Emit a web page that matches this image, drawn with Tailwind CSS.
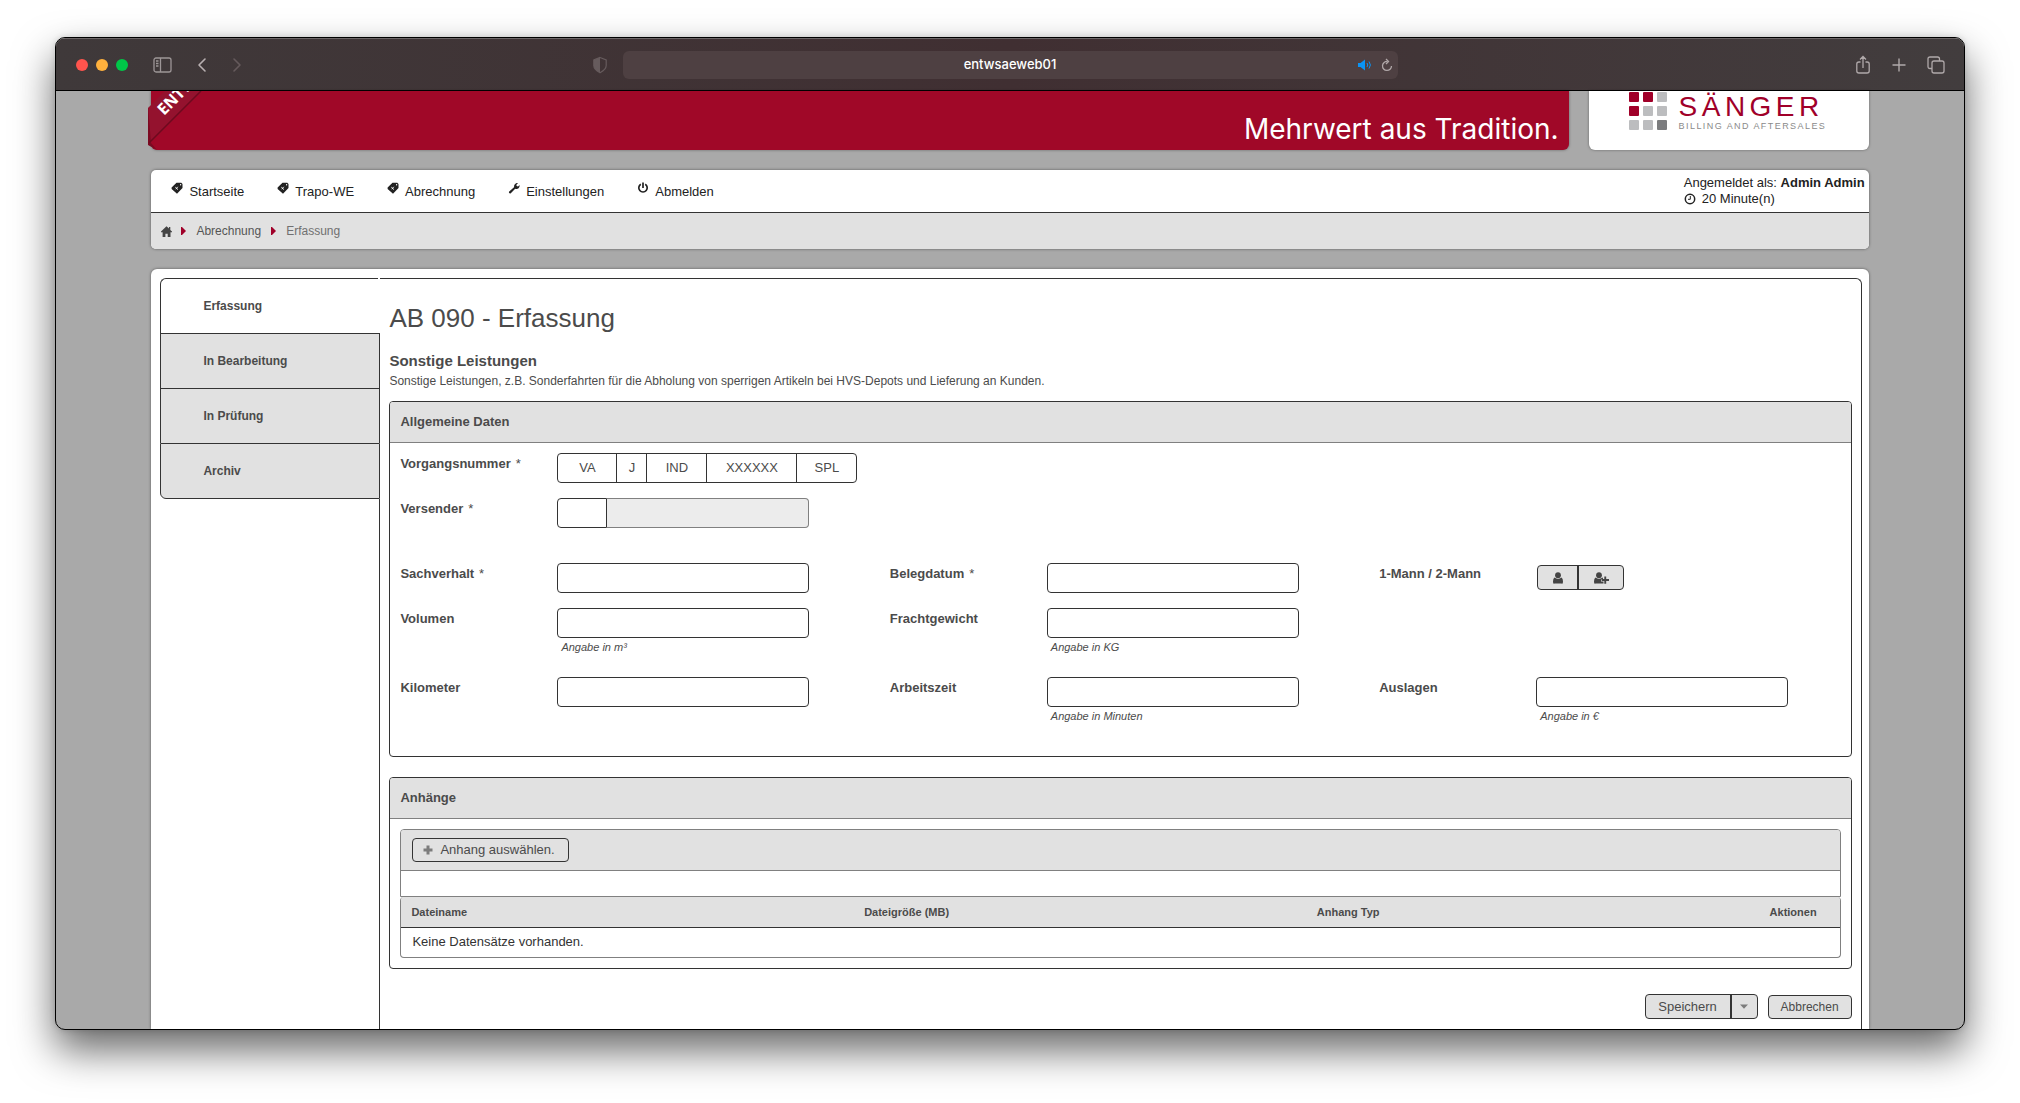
<!DOCTYPE html>
<html lang="de">
<head>
<meta charset="utf-8">
<title>entwsaeweb01</title>
<script src="https://cdn.jsdelivr.net/npm/@tailwindcss/browser@4"></script>
</head>
<body class="flex h-screen flex-col overflow-hidden bg-white px-[55px] pt-[37px] pb-[73px] font-['Liberation_Sans',Arial,sans-serif] text-[13px] text-[#4b4b4b]">
<svg class="hidden">
  <symbol id="tag" viewBox="0 0 12 12"><path fill="currentColor" fill-rule="evenodd" d="M5.500.8h4.800l1.200 1.200v4L6 11.800.6 7V5.600ZM9.600 2a.7.7 0 1 0 0 1.400.7.700 0 0 0 0-1.400Z"/><path stroke="#fff" stroke-width=".9" d="M4.300 5.200 7 7.600M6.800 4.800 4.800 7.200"/></symbol>
</svg>

<div class="flex min-h-0 flex-1 flex-col overflow-hidden rounded-[10px] border border-black bg-[#a9a9a9] shadow-[0_20px_40px_rgba(0,0,0,0.6),0_0_6px_rgba(0,0,0,0.15)]">

  <!-- browser toolbar -->
  <div class="grid h-[53px] shrink-0 grid-cols-[1fr_775px_1fr] items-center border-t border-b border-t-[#6c6667] border-b-black bg-linear-to-r from-[#3f393a] via-[#402f32] to-[#423d3e]">
    <div class="flex items-center pl-5">
      <div class="flex gap-2">
        <span class="size-3 rounded-full bg-[#ff544d]"></span>
        <span class="size-3 rounded-full bg-[#ffb13d]"></span>
        <span class="size-3 rounded-full bg-[#00c748]"></span>
      </div>
      <button class="ml-6 text-[#9d9697]" aria-label="Seitenleiste"><svg class="h-4 w-5" viewBox="0 0 20 16" fill="none" stroke="currentColor" stroke-width="1.300"><rect x="2" y="1" width="17" height="14" rx="2"/><path d="M8.500 1v14M4 4h2.500M4 6.500h2.500M4 9h2.500"/></svg></button>
      <button class="ml-6 text-[#b8b0b1]" aria-label="Zurück"><svg class="h-4 w-3" viewBox="0 0 12 16" fill="none" stroke="currentColor" stroke-width="1.600" stroke-linecap="round" stroke-linejoin="round"><path d="M9 2 3 8l6 6"/></svg></button>
      <button class="ml-6 text-[#655a5c]" aria-label="Vor"><svg class="h-4 w-3" viewBox="0 0 12 16" fill="none" stroke="currentColor" stroke-width="1.600" stroke-linecap="round" stroke-linejoin="round"><path d="m2 2 6 6-6 6"/></svg></button>
      <button class="mr-[15px] ml-auto text-[#665b5d]" aria-label="Datenschutz"><svg class="h-[18px] w-4" viewBox="0 0 16 18"><path d="M8 1.500 14.200 4v5.500c0 3.500-3 5.500-6.200 7.200C4.800 15 1.800 13 1.800 9.500V4Z" fill="none" stroke="currentColor" stroke-width="1.200"/><path d="M8 1.500v15.200C4.800 15 1.800 13 1.800 9.500V4Z" fill="currentColor"/></svg></button>
    </div>
    <div class="flex h-7 items-center rounded-md bg-[#4e4042] px-[5px] text-white">
      <span class="w-9"></span>
      <span class="flex-1 text-center font-['Inter',sans-serif] text-[13px] font-medium">entwsaeweb01</span>
      <span class="flex w-9 items-center gap-2">
        <svg class="h-3 w-4 text-[#0a94f5]" viewBox="0 0 16 12"><path d="M1 4h2.500L8 .5v11L3.500 8H1Z" fill="currentColor"/><path d="M10 4q1.500 2 0 4M12 2.500q2.800 3.500 0 7" fill="none" stroke="currentColor"/></svg>
        <svg class="h-[14px] w-3 text-[#b0a7a8]" viewBox="0 0 12 14" fill="none" stroke="currentColor" stroke-width="1.300"><path d="M6.500 3.500A4.500 4.500 0 1 0 10.500 8M5 1l2.500 2.500L5 6"/></svg>
      </span>
    </div>
    <div class="flex items-center justify-end gap-5 pr-[19px] text-[#b0a9aa]">
      <button aria-label="Teilen"><svg class="h-5 w-4" viewBox="0 0 16 20" fill="none" stroke="currentColor" stroke-width="1.300"><path d="M5.500 7H4Q1.800 7 1.800 9v7Q1.800 18 4 18h8q2.200 0 2.200-2V9Q14.200 7 12 7h-1.500M8 13V1.500M5 4.500l3-3 3 3"/></svg></button>
      <button aria-label="Neuer Tab"><svg class="size-4" viewBox="0 0 16 16" stroke="currentColor" stroke-width="1.400"><path d="M8 1.500v13M1.500 8h13"/></svg></button>
      <button aria-label="Tabübersicht"><svg class="size-[18px]" viewBox="0 0 18 18" fill="none" stroke="currentColor" stroke-width="1.300"><rect x="5" y="5" width="12" height="12" rx="2"/><path d="M5 12.500H3q-2 0-2-2V3q0-2 2-2h7.500q2 0 2 2v2"/></svg></button>
    </div>
  </div>

  <!-- page -->
  <div class="mx-auto flex min-h-0 w-[90%] flex-1 flex-col gap-5">
    <header class="flex h-[59px] shrink-0 gap-5">
      <div class="relative flex flex-1 items-end justify-end rounded-b-[6px] bg-[#a00828] pr-[10px] pb-[3px] shadow-[0_0_3px_rgba(0,0,0,0.4)]">
        <svg class="absolute top-0 -left-[3px] h-[59px] w-[56px]" viewBox="0 0 56 59">
          <path d="M0 17 17 0h36L0 53Z" fill="#94122e"/>
          <path d="M0 15v39l9 5L3 52Z" fill="#7c0a22"/>
          <path d="M53 0 1 52" stroke="#6d0a1e" stroke-width="1.500"/>
          <text transform="translate(16 25) rotate(-45)" fill="#fff" font-family="Open Sans, sans-serif" font-weight="700" font-size="16">ENTWICKLUNG</text>
        </svg>
        <span class="font-['Inter',sans-serif] text-[28px] leading-9 text-white">Mehrwert aus Tradition.</span>
      </div>
      <div class="flex w-[280px] gap-3 rounded-b-[6px] bg-white pl-10 shadow-[0_0_3px_rgba(0,0,0,0.4)]">
        <svg class="h-10 w-[38px]" viewBox="0 0 38 40">
          <g fill="#bcbdbf"><rect x="28" y="1" width="10" height="10" rx="1"/><rect x="14" y="15" width="10" height="10" rx="1"/><rect x="28" y="15" width="10" height="10" rx="1"/><rect y="29" width="10" height="10" rx="1"/><rect x="14" y="29" width="10" height="10" rx="1"/></g>
          <g fill="#a00029"><rect y="1" width="10" height="10" rx="1"/><rect x="14" y="1" width="10" height="10" rx="1"/><rect y="15" width="10" height="10" rx="1"/></g>
          <rect x="28" y="29" width="10" height="10" rx="1" fill="#7b7c7e"/>
        </svg>
        <div class="whitespace-nowrap">
          <div class="text-[28px] leading-[31px] tracking-[0.16em] text-[#a00029]">SÄNGER</div>
          <div class="text-[9px] leading-2 tracking-[0.16em] text-[#8a8a8a]">BILLING AND AFTERSALES</div>
        </div>
      </div>
    </header>

    <div class="shrink-0 overflow-hidden rounded-[5px] bg-white shadow-[0_0_3px_rgba(0,0,0,0.5)]">
      <div class="flex h-[43px] items-center justify-between border-b border-[#333] pr-1 pl-5 text-[#222]">
        <nav class="flex gap-[33px] pt-[2px]">
          <a href="#" class="flex gap-[6px]"><svg class="size-3"><use href="#tag"/></svg>Startseite</a>
          <a href="#" class="flex gap-[6px]"><svg class="size-3"><use href="#tag"/></svg>Trapo-WE</a>
          <a href="#" class="flex gap-[6px]"><svg class="size-3"><use href="#tag"/></svg>Abrechnung</a>
          <a href="#" class="flex gap-[6px]"><svg class="size-3" viewBox="0 0 12 12"><path fill="currentColor" d="M1.200 9.600 6 5.200Q5.500 2.500 8 1.200q1-.4 2 0L8.400 2.800l.2 1.300 1.400.3L11.600 3q.3 2-1 3.200T7.200 6.800L2.800 11.200Q1.800 11.800 1.200 11T1.200 9.600Z"/></svg>Einstellungen</a>
          <a href="#" class="flex gap-[6px]"><svg class="size-3" viewBox="0 0 12 12" fill="none" stroke="currentColor" stroke-width="1.700"><path d="M3.800 2.200a4.200 4.200 0 1 0 4.400 0M6 .5V6"/></svg>Abmelden</a>
        </nav>
        <div class="leading-4">
          <div>Angemeldet als: <b>Admin Admin</b></div>
          <div class="flex items-center gap-[6px]"><svg class="size-3" viewBox="0 0 12 12" fill="none" stroke="currentColor"><circle cx="6" cy="6" r="4.700" stroke-width="1.500"/><path d="M6.300 3v3.300H4"/></svg>20 Minute(n)</div>
        </div>
      </div>
      <nav class="flex h-9 items-center bg-[#e1e1e1] pl-[10px] text-[12px] text-[#555]">
        <a href="#" aria-label="Start"><svg class="h-[11px] w-[11px]" viewBox="0 0 11 11"><path fill="#444" d="M5.500.3 8 2.600V1h1.300v2.900L11 5.600v.6H9.500V11H6.700V7.800H4.400V11H1.600V6.200H0v-.6Z"/></svg></a>
        <svg class="ml-[9px] h-2 w-[5px]" viewBox="0 0 5 8"><path fill="#a00029" d="M0 0h1l4 4-4 4H0z"/></svg>
        <a href="#" class="ml-[10px]">Abrechnung</a>
        <svg class="ml-[10px] h-2 w-[5px]" viewBox="0 0 5 8"><path fill="#a00029" d="M0 0h1l4 4-4 4H0z"/></svg>
        <a href="#" class="ml-[10px] text-[#707070]">Erfassung</a>
      </nav>
    </div>

    <div class="flex min-h-0 flex-1 rounded-t-[6px] bg-white pt-[9px] pr-[7px] pl-[9px] shadow-[0_0_3px_rgba(0,0,0,0.5)]">
      <!-- side tabs -->
      <nav class="flex w-[220px] shrink-0 flex-col text-[12px] font-bold">
        <a href="#" class="mr-[2px] flex h-[55px] items-center rounded-tl-[6px] border-t border-l border-[#333] pl-[42px]">Erfassung</a>
        <a href="#" class="flex h-[55px] items-center border-x border-t border-[#333] bg-[#e1e1e1] pl-[42px]">In Bearbeitung</a>
        <a href="#" class="flex h-[55px] items-center border-x border-t border-[#333] bg-[#e1e1e1] pl-[42px]">In Prüfung</a>
        <a href="#" class="flex h-14 items-center rounded-bl-[6px] border border-[#333] bg-[#e1e1e1] pl-[42px]">Archiv</a>
        <div class="flex-1 border-r border-[#333]"></div>
      </nav>

      <main class="min-w-0 flex-1 overflow-hidden rounded-tr-[6px] border-t border-r border-[#333] px-[9px] pt-[23px]">
        <h1 class="text-[26px] leading-8">AB 090 - Erfassung</h1>
        <h2 class="mt-[17px] text-[15px] leading-5 font-bold">Sonstige Leistungen</h2>
        <p class="mt-[2px] text-[12px] leading-4">Sonstige Leistungen, z.B. Sonderfahrten für die Abholung von sperrigen Artikeln bei HVS-Depots und Lieferung an Kunden.</p>

        <section class="mt-3 overflow-hidden rounded-[4px] border border-[#333]">
          <h3 class="flex h-[41px] items-center border-b border-[#808080] bg-[#e1e1e1] px-[10px] font-bold">Allgemeine Daten</h3>
          <form class="px-[10px] pt-[10px] pb-[25px]">
            <div class="flex"><label for="vn" class="w-[157px] pt-[3px] leading-4 font-bold">Vorgangsnummer<span class="ml-[5px] font-normal">*</span></label>
              <div class="flex h-[30px] divide-x divide-[#333] rounded-[4px] border border-[#333] text-center">
                <input id="vn" value="VA" class="w-[59px] text-center"><input aria-label="Jahr" value="J" class="w-[30px] text-center"><input aria-label="Art" value="IND" class="w-[60px] text-center"><input aria-label="Nummer" value="XXXXXX" class="w-[90px] text-center"><input aria-label="Spedition" value="SPL" class="w-[59px] text-center">
              </div>
            </div>
            <div class="mt-[15px] flex"><label for="vs" class="w-[157px] pt-[3px] leading-4 font-bold">Versender<span class="ml-[5px] font-normal">*</span></label>
              <input id="vs" class="h-[30px] w-[50px] rounded-l-[4px] border border-[#333] px-2"><input aria-label="Versendername" disabled class="h-[30px] w-[202px] rounded-r-[4px] border border-l-0 border-[#808080] bg-[#ececec] px-2">
            </div>
            <div class="mt-[35px] grid grid-cols-3 gap-x-7 gap-y-[15px]">
              <div class="flex"><label for="sv" class="w-[157px] pt-[3px] leading-4 font-bold">Sachverhalt<span class="ml-[5px] font-normal">*</span></label><input id="sv" class="h-[30px] w-[252px] rounded-[4px] border border-[#333] px-2"></div>
              <div class="flex"><label for="bd" class="w-[157px] pt-[3px] leading-4 font-bold">Belegdatum<span class="ml-[5px] font-normal">*</span></label><input id="bd" class="h-[30px] w-[252px] rounded-[4px] border border-[#333] px-2"></div>
              <div class="flex"><span class="w-[157px] pt-[3px] leading-4 font-bold">1-Mann / 2-Mann</span>
                <div class="mt-[2px] ml-px flex h-[25px] overflow-hidden rounded-[4px] border border-[#333] bg-[#e1e1e1]">
                  <button type="button" aria-label="1-Mann" class="flex w-[41px] items-center justify-center border-r-2 border-[#333]"><svg class="h-3 w-[10px]" viewBox="0 0 10 12" fill="#444"><circle cx="5" cy="3.200" r="2.900"/><path d="M1.500 5.500q3.500 2.500 7 0Q10 6.500 10 9.500t-1.500 2h-7Q0 12.500 0 9.500t1.500-4Z"/></svg></button>
                  <button type="button" aria-label="2-Mann" class="flex w-[44px] items-center justify-center"><svg class="h-3 w-[15px]" viewBox="0 0 15 12" fill="#444"><circle cx="5" cy="3.200" r="2.900"/><path d="M1.500 5.500q3.500 2.500 7 0l.5.500v1.500H7v2h2.500v2h-8Q0 12.500 0 9.500t1.500-4ZM10.300 4.500h1.900v2.600H15V9h-2.800v2.700h-1.900V9H7.700V7.100h2.600Z"/></svg></button>
                </div>
              </div>
              <div class="flex"><label for="vo" class="w-[157px] pt-[3px] leading-4 font-bold">Volumen</label><div class="h-[54px]"><input id="vo" class="block h-[30px] w-[252px] rounded-[4px] border border-[#333] px-2"><div class="pt-px pl-1 text-[11px] leading-4 italic">Angabe in m³</div></div></div>
              <div class="flex"><label for="fg" class="w-[157px] pt-[3px] leading-4 font-bold">Frachtgewicht</label><div class="h-[54px]"><input id="fg" class="block h-[30px] w-[252px] rounded-[4px] border border-[#333] px-2"><div class="pt-px pl-1 text-[11px] leading-4 italic">Angabe in KG</div></div></div>
              <div></div>
              <div class="flex"><label for="km" class="w-[157px] pt-[3px] leading-4 font-bold">Kilometer</label><input id="km" class="h-[30px] w-[252px] rounded-[4px] border border-[#333] px-2"></div>
              <div class="flex"><label for="az" class="w-[157px] pt-[3px] leading-4 font-bold">Arbeitszeit</label><div class="h-[54px]"><input id="az" class="block h-[30px] w-[252px] rounded-[4px] border border-[#333] px-2"><div class="pt-px pl-1 text-[11px] leading-4 italic">Angabe in Minuten</div></div></div>
              <div class="flex"><label for="al" class="w-[157px] pt-[3px] leading-4 font-bold">Auslagen</label><div class="h-[54px]"><input id="al" class="block h-[30px] w-[252px] rounded-[4px] border border-[#333] px-2"><div class="pt-px pl-1 text-[11px] leading-4 italic">Angabe in €</div></div></div>
            </div>
          </form>
        </section>

        <section class="mt-5 overflow-hidden rounded-[4px] border border-[#333]">
          <h3 class="flex h-[41px] items-center border-b border-[#808080] bg-[#e1e1e1] px-[10px] font-bold">Anhänge</h3>
          <div class="p-[10px]">
            <div class="overflow-hidden rounded-t-[4px] border border-[#808080]">
              <div class="flex h-[41px] items-center border-b border-[#808080] bg-[#e1e1e1] pl-[11px]">
                <button class="flex h-6 w-[157px] items-center gap-[7px] rounded-[4px] border border-[#333] pl-[10px]"><svg class="size-[10px]" viewBox="0 0 10 10"><path fill="#7c7c7c" d="M3.500.5h3v3h3v3h-3v3h-3v-3h-3v-3h3z"/></svg>Anhang auswählen.</button>
              </div>
              <div class="h-[25px]"></div>
            </div>
            <div class="overflow-hidden rounded-[4px] border-x border-b border-[#808080]">
              <table class="w-full table-fixed text-left">
                <colgroup><col><col><col><col class="w-[80px]"></colgroup>
                <thead><tr class="h-[30px] border-b border-[#333] bg-[#e1e1e1] text-[11px]"><th class="px-[10px]">Dateiname</th><th class="px-[10px]">Dateigröße (MB)</th><th class="px-[10px]">Anhang Typ</th><th class="px-[10px]">Aktionen</th></tr></thead>
                <tbody><tr class="h-[30px] text-[#333]"><td colspan="4" class="px-[11px] pb-[2px]">Keine Datensätze vorhanden.</td></tr></tbody>
              </table>
            </div>
          </div>
        </section>

        <div class="mt-[25px] flex items-end justify-end gap-[10px]">
          <div class="flex h-[25px] overflow-hidden rounded-[4px] border border-[#333] bg-[#e1e1e1]">
            <button class="w-[86px] border-r-2 border-[#333]">Speichern</button>
            <button aria-label="Weitere Optionen" class="flex w-[25px] items-center justify-center"><svg class="h-[5px] w-2" viewBox="0 0 8 5"><path fill="#7c7c7c" d="M0 .5h8L4 4.800z"/></svg></button>
          </div>
          <button class="h-6 w-[84px] rounded-[4px] border border-[#333] bg-[#e1e1e1] text-[12px]">Abbrechen</button>
        </div>
      </main>
    </div>
  </div>
</div>
</body>
</html>
